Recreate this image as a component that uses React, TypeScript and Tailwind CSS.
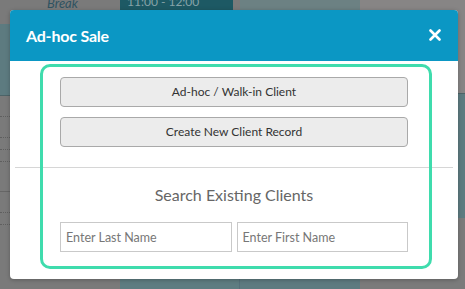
import React from "react";

export default function App() {
  return (
    <div
      className="relative w-[465px] h-[289px] overflow-hidden bg-[#7a7a7a]"
      style={{ fontFamily: "Lato, 'Open Sans', sans-serif" }}
    >
      {/* background calendar (dimmed) */}
      <div className="flex h-full w-full">
        <div className="w-[120px] flex flex-col">
          <div className="h-[30px] pl-[47px] -mt-[6px] text-[13px] italic text-[#2f5361]">Break</div>
          <div className="h-[72px] bg-[#5d7b80] border-b border-[#4d6468]" />
          <div className="h-[21px] border-b border-dotted border-[#5f5f5f]" />
          <div className="h-[21px] border-b border-dotted border-[#5f5f5f]" />
          <div className="h-[12px] border-b border-dotted border-[#5f5f5f]" />
          <div className="h-[12px] border-b border-dotted border-[#5f5f5f]" />
          <div className="h-[30px] border-b border-[#666]" />
          <div className="h-[21px] border-b border-dotted border-[#5f5f5f]" />
          <div className="h-[12px] border-b border-dotted border-[#5f5f5f]" />
          <div className="flex-1" />
        </div>
        <div className="w-[120px] flex flex-col">
          <div className="h-[60px] mr-[7px] bg-[#1d5964] pl-[7px] text-[12px] leading-[10px] text-[#86a3a8]">
            <div className="-mt-[3px]">11:00 - 12:00</div>
          </div>
          <div className="flex-1" />
          <div className="h-[30px] bg-[#5e7c81] border-r border-[#55707a] pl-[45px] text-[12px] text-[#2f4d57] italic">
            <div className="mt-[4px]">Lunch</div>
          </div>
        </div>
        <div className="w-[120px] flex flex-col">
          <div className="h-[60px] bg-[#6c8183]" />
          <div className="flex-1" />
          <div className="h-[30px] bg-[#5e7b80]" />
        </div>
        <div className="flex-1 flex flex-col bg-[#878585]">
          <div className="h-[93px]" />
          <div className="h-[125px] bg-[#5d7b80] border-t border-[#4d6468]" />
          <div className="flex-1 bg-[#7b7b7b]" />
        </div>
      </div>

      {/* modal */}
      <div className="absolute left-[10px] top-[10px] w-[448px] h-[269px] bg-white rounded-[4px] overflow-hidden shadow-[0_1px_4px_rgba(0,0,0,0.25)]">
        <div className="h-[51px] bg-[#0b97c4] flex items-center justify-between pl-[16px] pr-[17px]">
          <span className="text-white text-[16px] font-bold tracking-[-0.2px]">Ad-hoc Sale</span>
          <svg width="12" height="12" viewBox="0 0 12 12" className="mt-[-1px]">
            <path d="M1.5 1.5 L10.5 10.5 M10.5 1.5 L1.5 10.5" stroke="white" strokeWidth="2.6" strokeLinecap="round" />
          </svg>
        </div>
        <div className="relative">
          <div className="px-[50px] pt-[16px] flex flex-col gap-[10px]">
            <button className="h-[30px] w-full rounded-[4px] border border-[#a9a9a9] bg-[#ececec] text-[12px] text-[#333]">
              Ad-hoc / Walk-in Client
            </button>
            <button className="h-[30px] w-full rounded-[4px] border border-[#a9a9a9] bg-[#ececec] text-[12px] text-[#333]">
              Create New Client Record
            </button>
          </div>
          <div className="mx-[5px] mt-[20px] h-px bg-[#d6d6d6]" />
          <div className="mt-[16px] text-center text-[16px] leading-[22px] text-[#666]">Search Existing Clients</div>
          <div className="mt-[16px] px-[50px] flex gap-[5px]">
            <input
              placeholder="Enter Last Name"
              className="h-[30px] w-[172px] border border-[#c9c9c9] px-[5px] text-[12.5px] text-[#333] placeholder:text-[#777] outline-none"
            />
            <input
              placeholder="Enter First Name"
              className="h-[30px] w-[172px] border border-[#c9c9c9] px-[5px] text-[12.5px] text-[#333] placeholder:text-[#777] outline-none"
            />
          </div>
          {/* highlight */}
          <div className="absolute left-[30px] top-[3px] w-[392px] h-[205px] rounded-[10px] border-[3px] border-[#3fdcad] pointer-events-none" />
        </div>
      </div>
    </div>
  );
}
